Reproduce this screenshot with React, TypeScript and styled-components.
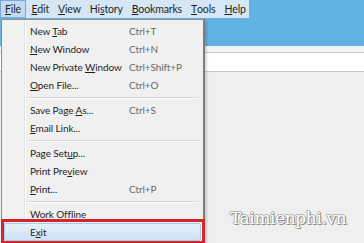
import React from "react";
import styled, { createGlobalStyle } from "styled-components";

const Global = createGlobalStyle`
  html, body { margin: 0; padding: 0; background: #efefef; }
  body { font-family: Lato, "Open Sans", sans-serif; }
`;

const Page = styled.div`
  position: relative;
  width: 364px;
  height: 243px;
  overflow: hidden;
  background: #efefef;
  display: flex;
  flex-direction: column;
`;

const TopRow = styled.div`
  display: flex;
  height: 18px;
  background: #62b2e4;
`;

const MenuBar = styled.div`
  display: flex;
  align-items: stretch;
  width: 249px;
  background: #d5e6f4;
  font-size: 10.5px;
  letter-spacing: -0.15px;
  color: #1f1f1f;
`;

const BarItem = styled.div<{ $active?: boolean }>`
  display: flex;
  align-items: center;
  white-space: nowrap;
  padding: 0 ${(p) => (p.$active ? "4px" : "3.5px")};
  margin-right: ${(p) => (p.$active ? "1px" : "0")};
  border: 1px solid ${(p) => (p.$active ? "#7ea7d3" : "transparent")};
  background: ${(p) => (p.$active ? "#c2dbf2" : "transparent")};
`;

const U = styled.span`
  text-decoration: underline;
  text-underline-offset: 1px;
`;

const Toolbar = styled.div`
  height: 28px;
  background: #62b2e4;
  display: flex;
  align-items: center;
`;

const TabPlus = styled.span`
  margin-left: 199px;
  font-size: 12px;
  color: #2a3a48;
  line-height: 1;
`;

const Strip = styled.div`
  height: 6px;
  background: #f3f3f3;
  border-bottom: 1px solid #c6c6c6;
`;

const UrlArea = styled.div`
  height: 18px;
  background: #ffffff;
  border-bottom: 1px solid #c8c8c8;
`;

const Body = styled.div`
  flex: 1;
  background: #efefef;
`;

const Menu = styled.div`
  position: absolute;
  left: 1px;
  top: 19px;
  width: 197px;
  padding: 2px;
  border: 1px solid #8f8f8f;
  border-right: 2px solid #7c7c7c;
  box-shadow: 2px 2px 2px rgba(0, 0, 0, 0.15);
  background: linear-gradient(
    to right,
    #f1f1f1 0 22px,
    #e2e3e3 22px 23px,
    #ffffff 23px 24px,
    #f0f0f0 24px
  );
  font-size: 10px;
  letter-spacing: -0.1px;
  color: #1f1f1f;
`;

const Item = styled.div<{ $hover?: boolean }>`
  position: relative;
  display: grid;
  grid-template-columns: 99px 1fr;
  align-items: center;
  height: 18px;
  padding-left: 25px;
  box-sizing: border-box;
  white-space: nowrap;
  border: 1px solid ${(p) => (p.$hover ? "#a9c9ee" : "transparent")};
  border-radius: 2px;
  background: ${(p) =>
    p.$hover ? "linear-gradient(#e6f0fb, #cfe2f6)" : "transparent"};
`;

const Shortcut = styled.span`
  color: #6a6a6a;
`;

const Sep = styled.div`
  height: 1px;
  margin: 3px 2px 2px 23px;
  background: #d7d7d7;
  border-bottom: 1px solid #ffffff;
`;

const RedBox = styled.div`
  position: absolute;
  inset: -5px -5px -4px -4px;
  border: 3px solid #d3262b;
  pointer-events: none;
`;

const Watermark = styled.div`
  position: absolute;
  left: 230px;
  top: 208px;
  font-family: "DejaVu Serif", serif;
  font-size: 17px;
  letter-spacing: -0.4px;
  color: #ffffff;
  text-shadow: 1px 1px 0 #8a8a8a, -1px 0 0 #b0b0b0, 0 -1px 0 #b0b0b0,
    1px 0 0 #9a9a9a;
`;

type Entry =
  | { sep: true }
  | { pre: string; u: string; post: string; sc?: string; hover?: boolean };

const entries: Entry[] = [
  { pre: "New ", u: "T", post: "ab", sc: "Ctrl+T" },
  { pre: "", u: "N", post: "ew Window", sc: "Ctrl+N" },
  { pre: "New Private ", u: "W", post: "indow", sc: "Ctrl+Shift+P" },
  { pre: "", u: "O", post: "pen File...", sc: "Ctrl+O" },
  { sep: true },
  { pre: "Save Page ", u: "A", post: "s...", sc: "Ctrl+S" },
  { pre: "", u: "E", post: "mail Link..." },
  { sep: true },
  { pre: "Page Set", u: "u", post: "p..." },
  { pre: "Print Pre", u: "v", post: "iew" },
  { pre: "", u: "P", post: "rint...", sc: "Ctrl+P" },
  { sep: true },
  { pre: "Wor", u: "k", post: " Offline" },
  { pre: "E", u: "x", post: "it", hover: true },
];

const bar: [string, string, string][] = [
  ["", "E", "dit"],
  ["", "V", "iew"],
  ["Hi", "s", "tory"],
  ["", "B", "ookmarks"],
  ["", "T", "ools"],
  ["", "H", "elp"],
];

export default function App() {
  return (
    <>
      <Global />
      <Page>
        <TopRow>
          <MenuBar>
            <BarItem $active>
              <U>F</U>ile
            </BarItem>
            {bar.map(([a, b, c]) => (
              <BarItem key={a + b + c}>
                {a}
                <U>{b}</U>
                {c}
              </BarItem>
            ))}
          </MenuBar>
        </TopRow>
        <Toolbar>
          <TabPlus>+</TabPlus>
        </Toolbar>
        <Strip />
        <UrlArea />
        <Body />
        <Menu>
          {entries.map((e, i) =>
            "sep" in e ? (
              <Sep key={i} />
            ) : (
              <Item key={i} $hover={e.hover}>
                <span>
                  {e.pre}
                  <U>{e.u}</U>
                  {e.post}
                </span>
                <Shortcut>{e.sc}</Shortcut>
                {e.hover && <RedBox />}
              </Item>
            )
          )}
        </Menu>
        <Watermark>Taimienphi.vn</Watermark>
      </Page>
    </>
  );
}
